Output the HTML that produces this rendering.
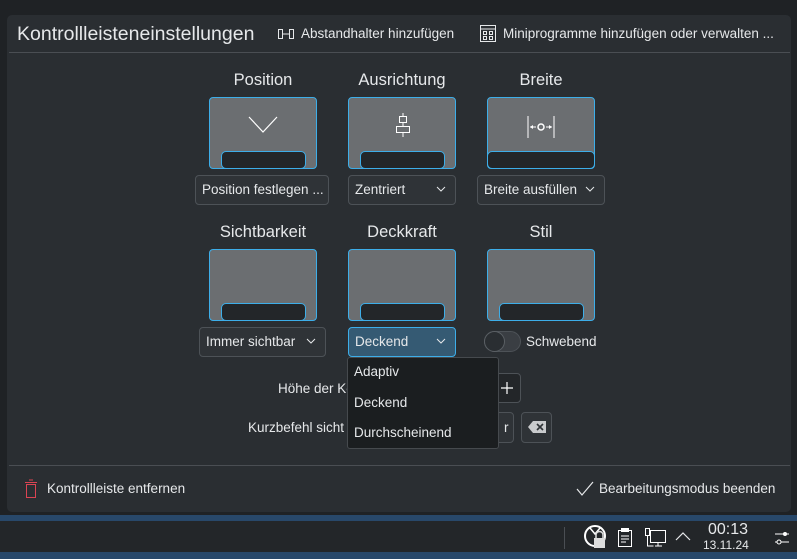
<!DOCTYPE html>
<html><head><meta charset="utf-8"><style>
*{margin:0;padding:0;box-sizing:border-box}
body{width:797px;height:559px;overflow:hidden;background:#1f2225;font-family:"Liberation Sans","DejaVu Sans",sans-serif;color:#e6e8ea;position:relative}
.a{position:absolute}
.panel{left:7px;top:15px;width:784px;height:497px;background:#2a2e32;border-radius:5px}
.t{font-size:13.5px;white-space:nowrap}
.lbl{font-size:16.5px;text-align:center;width:140px}
.box{width:108px;height:72px;background:#6b6e71;border:1px solid #3daee9;border-radius:4px}
.bar{position:absolute;bottom:-1px;left:11px;width:85px;height:18px;background:#232629;border:1px solid #3daee9;border-radius:5px}
.dd{height:30px;border:1px solid #4d5257;border-radius:4px;background:#2f3337;font-size:13.5px;padding-left:6px;line-height:28px;white-space:nowrap}
.chev{position:absolute;right:9px;top:8px}
</style></head><body>
<div class="a panel"></div>
<div class="a" style="left:17px;top:23px;font-size:19.5px">Kontrollleisteneinstellungen</div>
<svg class="a" style="left:278px;top:28px" width="16" height="12"><rect x="0.5" y="1.5" width="4" height="9" fill="none" stroke="#e6e8ea"/><rect x="11.5" y="1.5" width="4" height="9" fill="none" stroke="#e6e8ea"/><path d="M5 6h6" stroke="#e6e8ea"/></svg>
<div class="a t" style="left:301px;top:26px">Abstandhalter hinzufügen</div>
<svg class="a" style="left:480px;top:25px" width="16" height="17"><rect x="0.5" y="0.5" width="15" height="16" fill="none" stroke="#e6e8ea"/><path d="M0 4h16" stroke="#e6e8ea"/><rect x="3.5" y="6.5" width="3" height="3" fill="none" stroke="#e6e8ea"/><rect x="9.5" y="6.5" width="3" height="3" fill="none" stroke="#e6e8ea"/><rect x="3.5" y="11.5" width="3" height="3" fill="none" stroke="#e6e8ea"/><rect x="9.5" y="11.5" width="3" height="3" fill="none" stroke="#e6e8ea"/></svg>
<div class="a t" style="left:503px;top:26px">Miniprogramme hinzufügen oder verwalten ...</div>
<div class="a" style="left:9px;top:52px;width:781px;height:1px;background:#4a4e53"></div>

<div class="a lbl" style="left:193px;top:71px">Position</div>
<div class="a lbl" style="left:332px;top:71px">Ausrichtung</div>
<div class="a lbl" style="left:471px;top:71px">Breite</div>
<div class="a box" style="left:209px;top:97px"><div class="bar"></div><svg class="a" style="left:38px;top:18px" width="30" height="18"><path d="M1 1l14 15 14-15" fill="none" stroke="#fff" stroke-width="1.2"/></svg></div>
<div class="a box" style="left:348px;top:97px"><div class="bar"></div><svg class="a" style="left:44px;top:15px" width="20" height="24"><path d="M10 0v3M10 10v3M10 20v4" stroke="#fff"/><rect x="6.5" y="3.5" width="7" height="6" fill="none" stroke="#fff"/><rect x="3.5" y="13.5" width="13" height="6" fill="none" stroke="#fff"/></svg></div>
<div class="a box" style="left:487px;top:97px"><div class="bar" style="left:-1px;width:108px"></div><svg class="a" style="left:39px;top:18px" width="28" height="22"><path d="M1 0v22M27 0v22M3 11h6M19 11h6" stroke="#fff"/><circle cx="14" cy="11" r="3" fill="none" stroke="#fff" stroke-width="1.5"/><path d="M3 11l3-2v4zM25 11l-3-2v4z" fill="#fff"/></svg></div>
<div class="a dd" style="left:195px;top:175px;width:134px">Position festlegen ...</div>
<div class="a dd" style="left:348px;top:175px;width:108px">Zentriert<svg class="chev" width="10" height="10"><path d="M1 3l4 4 4-4" fill="none" stroke="#e6e8ea"/></svg></div>
<div class="a dd" style="left:477px;top:175px;width:128px">Breite ausfüllen<svg class="chev" width="10" height="10"><path d="M1 3l4 4 4-4" fill="none" stroke="#e6e8ea"/></svg></div>

<div class="a lbl" style="left:193px;top:223px">Sichtbarkeit</div>
<div class="a lbl" style="left:332px;top:223px">Deckkraft</div>
<div class="a lbl" style="left:471px;top:223px">Stil</div>
<div class="a box" style="left:209px;top:249px"><div class="bar"></div></div>
<div class="a box" style="left:348px;top:249px"><div class="bar"></div></div>
<div class="a box" style="left:487px;top:249px"><div class="bar"></div></div>
<div class="a dd" style="left:199px;top:327px;width:127px">Immer sichtbar<svg class="chev" width="10" height="10"><path d="M1 3l4 4 4-4" fill="none" stroke="#e6e8ea"/></svg></div>
<div class="a dd" style="left:348px;top:327px;width:108px;background:#355a73;border-color:#3daee9">Deckend<svg class="chev" width="10" height="10"><path d="M1 3l4 4 4-4" fill="none" stroke="#e6e8ea"/></svg></div>
<div class="a" style="left:484px;top:331px;width:37px;height:21px;border-radius:11px;background:#3a3e43;border:1px solid #4d5257"></div>
<div class="a" style="left:484px;top:331px;width:21px;height:21px;border-radius:50%;background:#2a2e32;border:1px solid #5a5f64"></div>
<div class="a t" style="left:526px;top:334px">Schwebend</div>

<div class="a t" style="left:278px;top:381px">Höhe der Ko</div>
<div class="a" style="left:495px;top:373px;width:26px;height:30px;border:1px solid #4d5257;border-radius:4px;background:#232629"></div>
<svg class="a" style="left:500px;top:381px" width="14" height="14"><path d="M7 1v12M1 7h12" stroke="#fff" stroke-width="1.2"/></svg>
<div class="a t" style="left:248px;top:420px">Kurzbefehl sicht</div>
<div class="a" style="left:480px;top:412px;width:34px;height:31px;border:1px solid #4d5257;border-radius:4px;background:#2f3337"></div>
<div class="a t" style="left:504px;top:420px">r</div>
<div class="a" style="left:521px;top:412px;width:31px;height:31px;border:1px solid #4d5257;border-radius:4px;background:#2f3337"></div>
<svg class="a" style="left:528px;top:421px" width="18" height="12"><path d="M5 0h13v12H5L0 6z" fill="#c9cbcd"/><path d="M9 3l6 6M15 3l-6 6" stroke="#2f3337" stroke-width="1.6"/></svg>

<div class="a" style="left:347px;top:357px;width:152px;height:92px;background:#1b1e20;border:1px solid #464a4e;border-radius:3px"></div>
<div class="a t" style="left:354px;top:364px">Adaptiv</div>
<div class="a t" style="left:354px;top:395px">Deckend</div>
<div class="a t" style="left:354px;top:425px">Durchscheinend</div>

<div class="a" style="left:9px;top:465px;width:781px;height:1px;background:#4a4e53"></div>
<svg class="a" style="left:24px;top:479px" width="14" height="19"><path d="M5 1h4M1 3.5h12" stroke="#da4453"/><rect x="2.5" y="5.5" width="9" height="13" fill="none" stroke="#da4453"/></svg>
<div class="a t" style="left:47px;top:481px">Kontrollleiste entfernen</div>
<svg class="a" style="left:576px;top:481px" width="18" height="15"><path d="M1 8l5 6L17 1" fill="none" stroke="#e6e8ea" stroke-width="1.2"/></svg>
<div class="a t" style="left:599px;top:481px">Bearbeitungsmodus beenden</div>

<div class="a" style="left:0;top:515px;width:797px;height:44px;background:#28486a"></div>
<div class="a" style="left:0;top:521px;width:797px;height:31px;background:#232629"></div>
<div class="a" style="left:564px;top:527px;width:1px;height:22px;background:#4a4e53"></div>
<svg class="a" style="left:584px;top:524px" width="24" height="26"><circle cx="11" cy="12" r="10" fill="none" stroke="#fff" stroke-width="2"/><path d="M6 4l5 6 5-6" fill="none" stroke="#fff" stroke-width="1.5"/><rect x="10" y="14" width="11" height="10" fill="#ddd"/><path d="M12 14v-3a3.5 3.5 0 0 1 7 0v3" fill="none" stroke="#ddd" stroke-width="1.5"/></svg>
<svg class="a" style="left:617px;top:528px" width="16" height="19"><rect x="1.5" y="2.5" width="13" height="16" fill="none" stroke="#fff"/><rect x="4" y="0" width="8" height="4" fill="#fff"/><path d="M4 8h8M4 11h8M4 14h5" stroke="#fff"/></svg>
<svg class="a" style="left:644px;top:528px" width="22" height="20"><rect x="1.5" y="0.5" width="4" height="7" fill="none" stroke="#fff"/><path d="M3.5 8v10h6" fill="none" stroke="#fff"/><rect x="6.5" y="2.5" width="15" height="12" fill="none" stroke="#fff"/><path d="M14 15v3M11 18h7" stroke="#fff"/></svg>
<svg class="a" style="left:675px;top:531px" width="16" height="10"><path d="M1 9l7-7 7 7" fill="none" stroke="#e6e8ea" stroke-width="1.2"/></svg>
<div class="a" style="left:708px;top:521px;font-size:16px">00:13</div>
<div class="a" style="left:703px;top:538px;font-size:12px">13.11.24</div>
<svg class="a" style="left:774px;top:530px" width="16" height="16"><path d="M1 4h14M1 12h14" stroke="#fff"/><circle cx="11" cy="4" r="2" fill="#fff"/><circle cx="5" cy="12" r="2" fill="#232629" stroke="#fff"/></svg>
</body></html>
